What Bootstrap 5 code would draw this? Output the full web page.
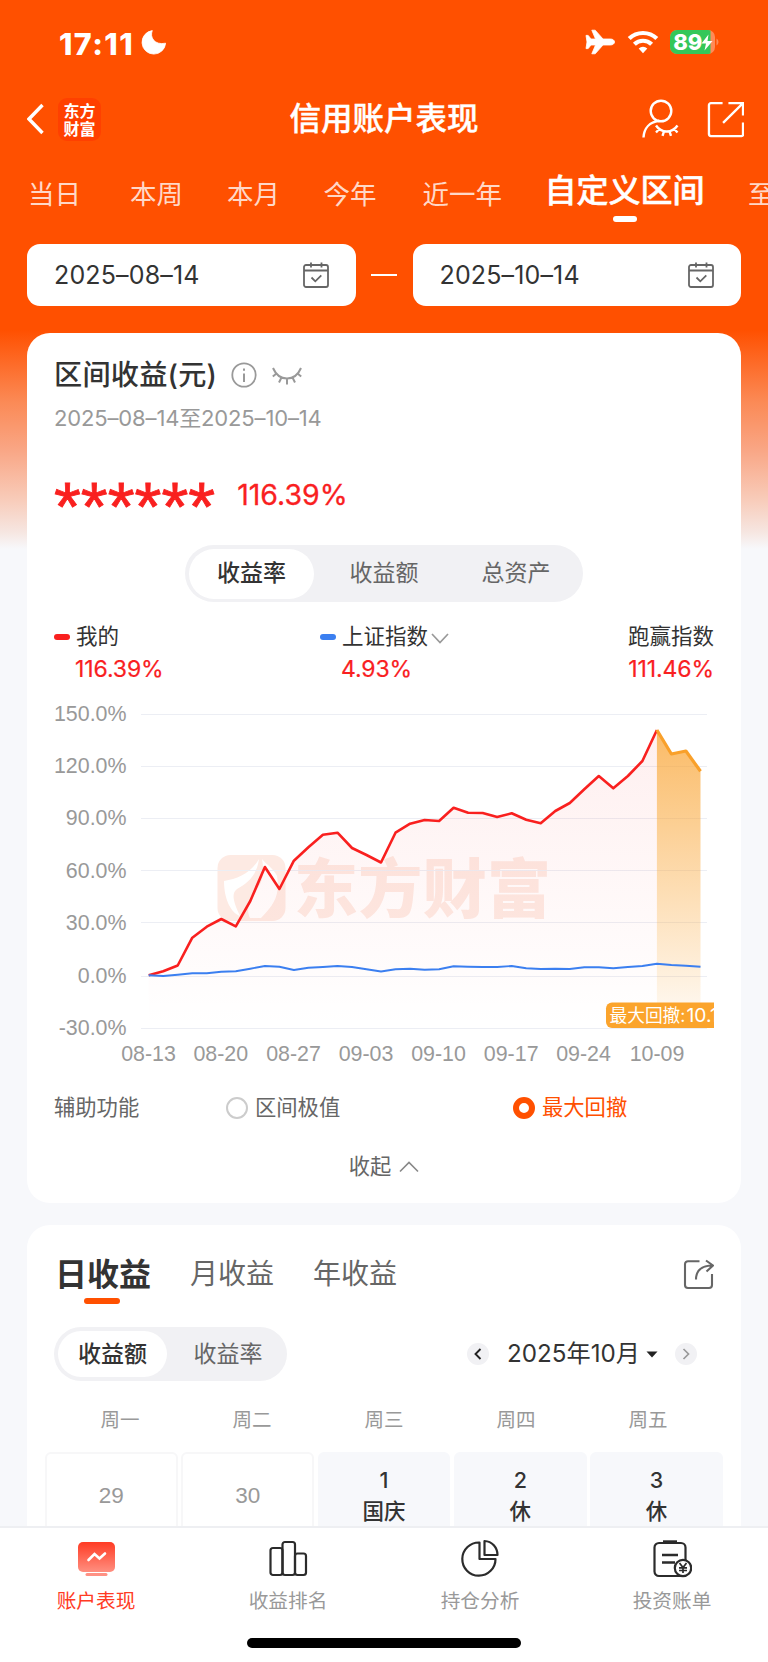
<!DOCTYPE html>
<html lang="zh-CN">
<head>
<meta charset="utf-8">
<meta name="viewport" content="width=device-width, initial-scale=1">
<title>信用账户表现</title>
<link href="https://cdn.jsdelivr.net/npm/bootstrap@5.3.0/dist/css/bootstrap.min.css" rel="stylesheet">
<style>
  body { font-family: Inter, "Noto Sans CJK SC", sans-serif; color: #333; background: #f7f8fb; line-height: 1; }
  svg { display: block; flex: none; }
  .screen { width: 768px; height: 1662px; background: linear-gradient(#ff5000 0, #ff5000 330px, #fb8a56 402px, #f9a685 450px, #f8ccba 500px, #f6e6e1 532px, #f7f8fb 549px); }
  .status-row { height: 82px; padding: 2px 49px 0 59px; }
  .clock { font-size: 30.5px; font-weight: 800; letter-spacing: 1.4px; }
  .title-row { height: 74px; padding: 0 24px 0 27px; }
  .brand-chip { width: 43px; height: 43px; border-radius: 9px; background: #ff4000; font-size: 16px; font-weight: 700; line-height: 18px; padding-top: 4px; margin-left: 14px; }
  .page-title { font-size: 31.5px; font-weight: 500; -webkit-text-stroke: .4px; }
  .period-tabs { height: 88px; padding-left: 28px; font-size: 26.5px; color: rgba(255,255,255,.8); overflow: hidden; }
  .period-tabs span { flex: none; height: 76px; line-height: 76px; }
  .period-tabs .chosen { font-size: 32px; font-weight: 500; color: #fff; line-height: 69px; position: relative; -webkit-text-stroke: .5px; }
  .period-tabs .chosen::after { content: ""; position: absolute; left: 50%; margin-left: -12px; top: 60px; width: 24px; height: 6px; border-radius: 3px; background: #fff; }
  .date-row { padding: 0 27px; height: 62px; }
  .date-box { width: 328.5px; height: 62px; border-radius: 13px; background: #fff; padding: 0 27px; color: #333; font-size: 25px; letter-spacing: .15px; }
  .panel { margin: 0 27px; background: #fff; border-radius: 23px; padding: 0 27px; }
  .panel-a { margin-top: 27px; height: 870px; }
  .panel-b { margin-top: 22px; height: 400px; }
  .heading { font-size: 28.2px; font-weight: 500; height: 84px; line-height: 84px; letter-spacing: .2px; }
  .range-text { font-size: 22px; color: #999; letter-spacing: -.15px; height: 20px; line-height: 20px; margin-top: -9px; }
  .rise { color: #f9201f; }
  .amount-row { height: 70px; margin-top: 32px; }
  .stars { font-family: "Liberation Sans", sans-serif; font-size: 69px; line-height: 70px; height: 70px; padding-top: 12px; -webkit-text-stroke: .8px #f9201f; }
  .ratio { font-size: 28.5px; margin-left: 22px; -webkit-text-stroke: .3px; }
  .seg { background: #f1f1f4; border-radius: 30px; color: #666; font-size: 23px; }
  .seg > span { border-radius: 26px; text-align: center; flex: none; }
  .seg > .on { background: #fff; color: #333; font-weight: 500; }
  .seg-a { width: 398px; height: 57px; margin: 15px auto 0; padding: 3.5px 4px; }
  .seg-a > span { width: 132px; height: 50px; line-height: 49px; }
  .seg-a > .on { width: 125px; margin-right: 4px; }
  .legend { height: 92px; padding-top: 19px; font-size: 21.5px; line-height: 30px; }
  .legend .val { font-size: 23px; line-height: 36px; letter-spacing: -.1px; -webkit-text-stroke: .2px; }
  .dash { width: 16px; height: 5.5px; border-radius: 3px; margin: 2px 6px 0 0; }
  .chart { margin-left: -27px; }
  .chart .axis { font: 21.4px "Liberation Sans", sans-serif; fill: #999; }
  .aids { height: 60px; font-size: 21.3px; color: #666; }
  .ring { width: 22px; height: 22px; border-radius: 50%; border: 2px solid #ccc; }
  .ring.sel { border: 6.5px solid #ff5000; }
  .fold { height: 57px; font-size: 21.3px; color: #666; }
  .pl-tabs { height: 98px; font-size: 28px; color: #666; line-height: 99px; padding-left: 1px; }
  .pl-tabs .on { font-size: 32px; font-weight: 700; color: #333; position: relative; }
  .pl-tabs .on::after { content: ""; position: absolute; left: 29px; top: 73px; width: 36px; height: 6px; border-radius: 3px; background: #ff5000; }
  .seg-b { width: 233px; height: 54px; padding: 4px; }
  .seg-b > span { width: 109px; height: 46px; line-height: 46px; }
  .seg-b > span + span { width: 122px; }
  .round { width: 22px; height: 22px; border-radius: 50%; background: #f1f1f4; }
  .month { font-size: 24.2px; }
  .week { height: 63px; margin-top: 8px; font-size: 19.5px; color: #999; }
  .days { margin: 0 -9px; gap: 3.6px; }
  .day { flex: 1 1 0; height: 100px; border: 2px solid #f7f7f8; border-radius: 6px; color: #999; font: 22.5px "Liberation Sans", sans-serif; line-height: 83px; text-align: center; }
  .day.off { background: #f7f8fb; border-color: #f7f8fb; color: #333; padding-top: 11px; font: 500 21.5px/30.5px Inter, "Noto Sans CJK SC", sans-serif; }
  .tabbar { height: 136px; border-top: 2px solid #eeeff2; background: #fff; font-size: 19.7px; color: #999; position: relative; }
  .tabbar .item { padding-top: 10px; }
  .tabbar .item div { margin-top: 14px; }
  .home-bar { position: absolute; left: 247px; top: 110px; width: 274px; height: 10px; border-radius: 5px; background: #000; }
</style>
</head>
<body>
<div class="screen d-flex flex-column overflow-hidden">
 <div class="flex-grow-1 overflow-hidden" style="min-height:0">
  <div class="status-row d-flex align-items-center text-white">
    <span class="clock pt-1">17:11</span>
    <svg style="margin-left:7px" width="26" height="26" viewBox="0 0 26 26"><path d="M11.300 1.600C8.600 7.800 13 16.600 24.600 14.200A11.800 11.800 0 1 1 11.300 1.600Z" fill="#fff" stroke="#fff" stroke-width=".8" stroke-linejoin="round"/></svg>
    <svg class="ms-auto" width="30" height="28" viewBox="0 0 30 28"><path d="M10.500 11 6.800 2.200h3.400L18 11h7.500c2.400 0 4 1.400 4 3s-1.600 3-4 3H18l-7.800 8.800H6.800L10.500 17H6l-2.800 3.600H1L2 14 1 7.400h2.200L6 11Z" fill="#fff" stroke="#fff" stroke-width=".8" stroke-linejoin="round"/></svg>
    <svg style="margin-left:12px" width="32" height="26" viewBox="0 0 32 26"><g fill="none" stroke="#fff" stroke-width="4.200"><path d="M2.200 9.600a19.800 19.800 0 0 1 27.600 0"/><path d="M7.400 15.200a12.400 12.400 0 0 1 17.200 0"/></g><path d="M16 24.200l-4.300-4.600a6.200 6.200 0 0 1 8.600 0Z" fill="#fff"/></svg>
    <svg style="margin-left:11px" width="49" height="26" viewBox="0 0 49 26"><defs><clipPath id="cap"><rect x="0" y="1" width="45" height="24" rx="7"/></clipPath></defs><g clip-path="url(#cap)"><rect width="45" height="26" fill="#ff8a58"/><rect width="40.500" height="26" fill="#34c759"/></g><path d="M46.500 9.500c2.600 1.500 2.600 5.500 0 7Z" fill="#ff8a58"/><text x="3.300" y="20.800" font-family="Inter" font-weight="800" font-size="22" textLength="29" fill="#fff">89</text><path d="M38.500 5.500 31.500 14.500h4.500L34.500 21.500 42.500 12h-5Z" fill="#fff"/></svg>
  </div>
  <div class="title-row d-flex align-items-center text-white position-relative">
    <svg width="17" height="32" viewBox="0 0 17 32"><path d="M15.500 2 2 16l13.500 14" fill="none" stroke="#fff" stroke-width="3.400"/></svg>
    <div class="brand-chip text-center">东方<br>财富</div>
    <div class="page-title position-absolute start-50 translate-middle-x">信用账户表现</div>
    <svg class="ms-auto" width="39" height="40" viewBox="0 0 39 40" fill="none" stroke="#fff" stroke-width="2.400"><circle cx="20" cy="12" r="10.300"/><path d="M18 21.800C9 23 3 29 2.500 38.500"/><path d="M15 26.500c5.500 8 16 8 21.500 0M18 30.300l-3 3.200M23 32.300l-1.500 4.500M28.500 32.300l1.500 4.500M33.500 30.300l3 3.200"/></svg>
    <svg style="margin-left:27px" width="37" height="37" viewBox="0 0 38 38" fill="none" stroke="#fff" stroke-width="2.400"><path d="M16 2.200H4a2 2 0 0 0-2 2V34a2 2 0 0 0 2 2h31.500a1.500 1.500 0 0 0 1.500-1.500V22M22 2.200h15V15M37 2.200 16.500 22.500"/></svg>
  </div>
  <div class="period-tabs d-flex">
    <span>当日</span><span style="margin-left:49px">本周</span><span style="margin-left:44px">本月</span><span style="margin-left:43.5px">今年</span><span style="margin-left:46px">近一年</span><span class="chosen" style="margin-left:42.500px">自定义区间</span><span style="margin-left:43.500px">至今</span>
  </div>
  <div class="date-row d-flex align-items-center justify-content-between">
    <div class="date-box d-flex align-items-center justify-content-between"><span>2025–08–14</span>
      <svg width="26" height="26" viewBox="0 0 26 26" fill="none" stroke="#666" stroke-width="1.800"><rect x="1" y="3" width="24" height="22" rx="2"/><path d="M1 8.500h24M8 .5v5M18.500 .5v5M8.500 15.500l3.800 3.800 6-6"/></svg></div>
    <div class="bg-white" style="width:26px;height:2px"></div>
    <div class="date-box d-flex align-items-center justify-content-between"><span>2025–10–14</span>
      <svg width="26" height="26" viewBox="0 0 26 26" fill="none" stroke="#666" stroke-width="1.800"><rect x="1" y="3" width="24" height="22" rx="2"/><path d="M1 8.500h24M8 .5v5M18.500 .5v5M8.500 15.500l3.800 3.800 6-6"/></svg></div>
  </div>

  <section class="panel panel-a">
    <div class="heading d-flex align-items-center">区间收益(元)
      <svg style="margin-left:14px" width="26" height="26" viewBox="0 0 26 26" fill="none" stroke="#999" stroke-width="1.800"><circle cx="13" cy="13" r="11.700"/><path d="M13 11.500V20M13 6.500v2.200" stroke-width="2"/></svg>
      <svg style="margin-left:15px" width="30" height="19" viewBox="0 0 30 19" fill="none" stroke="#999" stroke-width="2"><path d="M1 2c6 14 22 14 28 0M4.500 7.500.8 10.500M9.500 11.500 7 16.500M15 12.500v6M20.500 11.500 23 16.500M25.500 7.500l3.700 3"/></svg>
    </div>
    <div class="range-text">2025–08–14至2025–10–14</div>
    <div class="amount-row d-flex align-items-center rise"><span class="stars">******</span><span class="ratio">116.39%</span></div>
    <div class="seg seg-a d-flex"><span class="on">收益率</span><span>收益额</span><span>总资产</span></div>
    <div class="legend d-flex justify-content-between">
      <div style="width:266px"><div class="d-flex align-items-center"><i class="dash" style="background:#f9201f"></i>我的</div><div class="val rise" style="padding-left:21px">116.39%</div></div>
      <div class="flex-grow-1"><div class="d-flex align-items-center"><i class="dash" style="background:#3b7ff0"></i>上证指数<svg class="mt-1" style="margin-left:3px" width="18" height="11" viewBox="0 0 18 11"><path d="M1 1l8 8.500L17 1" fill="none" stroke="#999" stroke-width="1.700"/></svg></div><div class="val rise" style="padding-left:21px">4.93%</div></div>
      <div class="text-end"><div>跑赢指数</div><div class="val rise">111.46%</div></div>
    </div>
    <svg class="chart" width="687" height="384" viewBox="27 694 687 384">
      <defs>
        <linearGradient id="gr" gradientUnits="userSpaceOnUse" x1="0" y1="730" x2="0" y2="1028"><stop offset="0" stop-color="#f9201f" stop-opacity=".07"/><stop offset="1" stop-color="#f9201f" stop-opacity="0"/></linearGradient>
        <linearGradient id="go" gradientUnits="userSpaceOnUse" x1="0" y1="730" x2="0" y2="1010"><stop offset="0" stop-color="#f9a02a" stop-opacity=".72"/><stop offset="1" stop-color="#f9a02a" stop-opacity=".08"/></linearGradient>
      </defs>
      <rect x="217.500" y="855" width="68" height="66" rx="13" fill="#fdeae3"/>
      <g fill="#fff"><path d="M224 881c14-2 27-8 35-22-2 16-11 24-22 30-5 4-5 10 3 27-9-3-16-17-16-35Z"/><path d="M262 859c3 16 0 26-9 34-4 8-7 17-3 25h11c14-14 19-24 16-42-3-7-9-10-15-17Z"/></g>
      <text x="294" y="912" font-family="Noto Sans CJK SC" font-weight="900" font-size="64" textLength="257" fill="#fdeae3">东方财富</text>
      <path d="M141 714.500H707M141 766.500H707M141 818.500H707M141 870.500H707M141 922.500H707M141 976.500H707M141 1028.500H707" stroke="#eceef4" stroke-width="1.200"/>
      <path id="area" fill="url(#gr)"/>
      <path id="down" fill="url(#go)"/>
      <path id="mine" fill="none" stroke="#f9201f" stroke-width="2.600" stroke-linejoin="round"/>
      <path id="tail" fill="none" stroke="#f9a02a" stroke-width="3.200" stroke-linejoin="round"/>
      <path id="index" fill="none" stroke="#3b7ff0" stroke-width="1.900" stroke-linejoin="round"/>
      <path d="M714 1002.600H612a6 6 0 0 0-6 6v13.400a6 6 0 0 0 6 6H714Z" fill="#fba42c"/>
      <text x="609.500" y="1021.500" font-family="Inter, Noto Sans CJK SC" font-size="17.700" fill="#fff">最大回撤:<tspan x="686.500" font-size="19.300">10.11%</tspan></text>
      <g class="axis" text-anchor="end"><text x="126.500" y="720.800">150.0%</text><text x="126.500" y="773">120.0%</text><text x="126.500" y="825">90.0%</text><text x="126.500" y="877.500">60.0%</text><text x="126.500" y="929.800">30.0%</text><text x="126.500" y="982.500">0.0%</text><text x="126.500" y="1035">-30.0%</text></g>
      <g class="axis" text-anchor="middle"><text x="148.500" y="1060.500">08-13</text><text x="220.800" y="1060.500">08-20</text><text x="293.500" y="1060.500">08-27</text><text x="366" y="1060.500">09-03</text><text x="438.500" y="1060.500">09-10</text><text x="511.200" y="1060.500">09-17</text><text x="583.500" y="1060.500">09-24</text><text x="657" y="1060.500">10-09</text></g>
    </svg>
    <div class="aids d-flex align-items-center">
      <div style="width:172px">辅助功能</div>
      <div class="d-flex align-items-center" style="width:287px"><i class="ring" style="margin-right:7px"></i>区间极值</div>
      <div class="d-flex align-items-center" style="color:#ff5000"><i class="ring sel" style="margin-right:7px"></i>最大回撤</div>
    </div>
    <div class="fold d-flex align-items-center justify-content-center">收起<svg style="margin-left:8px" width="20" height="12" viewBox="0 0 20 12"><path d="M1 10.500 10 1.500l9 9" fill="none" stroke="#888" stroke-width="1.600"/></svg></div>
  </section>

  <section class="panel panel-b">
    <div class="pl-tabs d-flex align-items-center">
      <span class="on">日收益</span><span style="margin-left:39px">月收益</span><span style="margin-left:39px">年收益</span>
      <svg class="ms-auto" width="31" height="31" viewBox="0 0 31 31" fill="none" stroke="#666" stroke-width="2.100"><path d="M16.500 2.200H5a3 3 0 0 0-3 3V26a3 3 0 0 0 3 3h21a3 3 0 0 0 3-3V15M13 20.500C13 12 18 6.500 30 6.500M23 1.500l7 5-6.500 6"/></svg>
    </div>
    <div class="d-flex align-items-center" style="margin-top:4px">
      <div class="seg seg-b d-flex"><span class="on">收益额</span><span>收益率</span></div>
      <i class="round ms-auto d-flex align-items-center justify-content-center"><svg width="8" height="12" viewBox="0 0 8 12"><path d="M6.500 1 1.500 6l5 5" fill="none" stroke="#222" stroke-width="1.900"/></svg></i>
      <span class="month" style="margin-left:18px">2025年10月</span>
      <svg style="margin-left:6px" width="12" height="7" viewBox="0 0 12 7"><path d="M.5.500h11L6 6.500Z" fill="#222"/></svg>
      <i class="round d-flex align-items-center justify-content-center" style="margin:0 17px 0 17px"><svg width="8" height="12" viewBox="0 0 8 12"><path d="M1.500 1l5 5-5 5" fill="none" stroke="#999" stroke-width="1.700"/></svg></i>
    </div>
    <div class="week row g-0 align-items-center text-center"><div class="col">周一</div><div class="col">周二</div><div class="col">周三</div><div class="col">周四</div><div class="col">周五</div></div>
    <div class="days d-flex"><div class="day">29</div><div class="day">30</div><div class="day off">1<br>国庆</div><div class="day off">2<br>休</div><div class="day off">3<br>休</div></div>
  </section>
 </div>

 <nav class="tabbar d-flex flex-shrink-0">
    <div class="item col-3 text-center" style="color:#ff3b24"><svg class="mx-auto" width="40" height="40" viewBox="0 0 40 40"><defs><linearGradient id="ti" x2="0" y2="1"><stop stop-color="#ff3b24"/><stop offset="1" stop-color="#ff8f80"/></linearGradient></defs><rect x="2" y="4" width="37" height="30" rx="5" fill="url(#ti)"/><rect x="9.500" y="35" width="22" height="3" rx="1.500" fill="#ff9184"/><path d="M12.500 22l6-6 5 4.500 5.500-5" fill="none" stroke="#fff" stroke-width="2.600" stroke-linecap="round"/></svg><div>账户表现</div></div>
    <div class="item col-3 text-center"><svg class="mx-auto" width="40" height="40" viewBox="0 0 40 40" fill="none" stroke="#2b2b2b" stroke-width="2.200"><rect x="2.500" y="10" width="12" height="27" rx="2.500"/><rect x="14.500" y="4" width="12.500" height="33" rx="2.500"/><rect x="27" y="15.500" width="11" height="21.500" rx="2.500"/></svg><div>收益排名</div></div>
    <div class="item col-3 text-center"><svg class="mx-auto" width="40" height="40" viewBox="0 0 40 40" fill="none" stroke="#2b2b2b" stroke-width="2.200" stroke-linejoin="round"><path d="M19.500 4.500A16.600 16.600 0 1 0 35.500 21H19.500Z"/><path d="M24.500 3v14h13C37.500 9.500 32 3.300 24.500 3Z"/></svg><div>持仓分析</div></div>
    <div class="item col-3 text-center"><svg class="mx-auto" width="40" height="40" viewBox="0 0 40 40" fill="none" stroke="#2b2b2b" stroke-width="2.200"><rect x="2.500" y="5" width="31" height="33" rx="4.500"/><path d="M11 3.700h14" stroke-width="2.800"/><path d="M10 17h16M10 24.500h13" stroke-width="2.600"/><circle cx="31" cy="30" r="8.200" fill="#fff"/><path d="M27.500 25l3.500 4.500 3.500-4.500M31 29.500V35M27 29.800h8M27 32.500h8" stroke-width="1.700"/></svg><div>投资账单</div></div>
    <div class="home-bar"></div>
 </nav>
</div>
<script src="https://cdn.jsdelivr.net/npm/bootstrap@5.3.0/dist/js/bootstrap.bundle.min.js"></script>
<script>
  const mine = [975.3,971.3,965.5,937.7,926.7,919,926.3,901,867,889,860.7,847.3,834.7,832.7,848,855,862.5,832.7,823.7,820,821,807.7,812.7,813,817,813.3,819.7,823.3,811,803,789.3,776,788.3,776,761,730,754,751,771.3];
  const index = [975.3,976,974.7,973.3,973.3,971.7,971.3,968.7,966,966.7,970,967.7,967,966,967,969.3,971.5,969.3,968.7,969.7,969.3,966.3,966.7,967,967,966,968.3,969,968.7,969,967.3,967.3,968.3,967,966,963.7,965,965.7,966.7];
  const x = i => (148.7 + 14.52 * i).toFixed(1);
  const line = (a, from, to) => 'M' + a.slice(from, to + 1).map((v, k) => x(k + from) + ' ' + v).join('L');
  const put = (id, d) => document.getElementById(id).setAttribute('d', d);
  put('mine', line(mine, 0, 35));
  put('tail', line(mine, 35, 38));
  put('index', line(index, 0, 38));
  put('area', line(mine, 0, 35) + 'V1028H' + x(0) + 'Z');
  put('down', line(mine, 35, 38) + 'V1003H' + x(35) + 'Z');
</script>
</body>
</html>
